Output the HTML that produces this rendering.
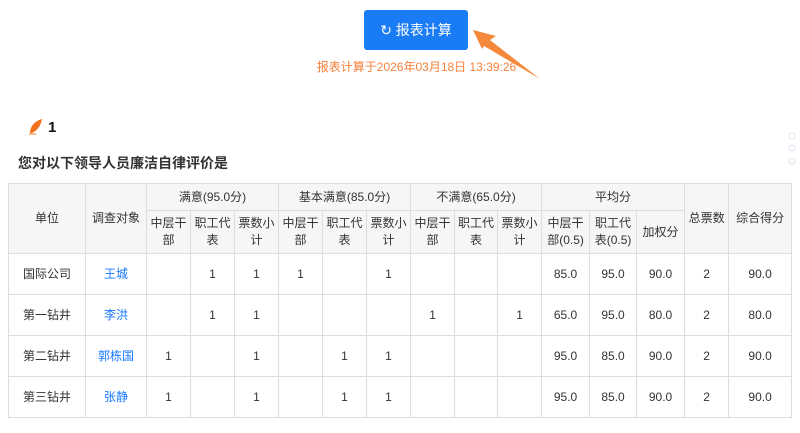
<!DOCTYPE html>
<html><head><meta charset="utf-8"><style>
body{margin:0;width:800px;height:433px;background:#fff;font-family:"Liberation Sans","Noto Sans CJK SC",sans-serif;position:relative;overflow:hidden}
.btn{position:absolute;left:364px;top:10px;width:104px;height:40px;background:#1a7cf5;border-radius:3px;color:#fff;font-size:14px;line-height:40px;text-align:center}
.ts{position:absolute;left:0;width:833px;top:58px;text-align:center;color:#f5813a;font-size:12px}
.num{position:absolute;left:48px;top:119px;font-size:15px;font-weight:bold;color:#111}
.title{position:absolute;left:18px;top:153px;font-size:14px;font-weight:bold;color:#333}
table{position:absolute;left:8px;top:183px;border-collapse:collapse;table-layout:fixed;width:784px;font-size:12px;color:#333}
td,th{border:1px solid #ddd;text-align:center;font-weight:normal;padding:0;line-height:17px}
th{background:#f6f6f6}
tr.h1{height:27px}tr.h2{height:43px}tr.d{height:41px}
a{color:#1677ff;text-decoration:none}
</style></head><body>
<div class="btn">↻ 报表计算</div>
<div class="ts">报表计算于2026年03月18日 13:39:26</div>
<svg style="position:absolute;left:0;top:0" width="800" height="433">
<path d="M473 30 L496 36 L490 40 L540 79 L484 46 L482 49Z" fill="#f5893b"/>
<path d="M30 133 C30 126 35 121 42 119 C41 125 38 130 32 133Z" fill="#f2711c"/>
<path d="M29 134 L36 134" stroke="#f2711c" stroke-width="1"/>
<circle cx="792" cy="136" r="3" fill="none" stroke="#dbe6f0"/>
<circle cx="792" cy="148" r="3" fill="none" stroke="#dbe6f0"/>
<circle cx="792" cy="161" r="3" fill="none" stroke="#dbe6f0"/>
</svg>
<div class="num">1</div>
<div class="title">您对以下领导人员廉洁自律评价是</div>
<table>
<colgroup><col style="width:77px"><col style="width:61px"><col style="width:44px"><col style="width:44px"><col style="width:44px"><col style="width:44px"><col style="width:44px"><col style="width:44px"><col style="width:44px"><col style="width:43px"><col style="width:44px"><col style="width:48px"><col style="width:47px"><col style="width:48px"><col style="width:44px"><col style="width:63px"></colgroup>
<tr class="h1"><th rowspan="2">单位</th><th rowspan="2">调查对象</th><th colspan="3">满意(95.0分)</th><th colspan="3">基本满意(85.0分)</th><th colspan="3">不满意(65.0分)</th><th colspan="3">平均分</th><th rowspan="2">总票数</th><th rowspan="2">综合得分</th></tr>
<tr class="h2"><th>中层干部</th><th>职工代表</th><th>票数小计</th><th>中层干部</th><th>职工代表</th><th>票数小计</th><th>中层干部</th><th>职工代表</th><th>票数小计</th><th>中层干部(0.5)</th><th>职工代表(0.5)</th><th>加权分</th></tr>
<tr class="d"><td>国际公司</td><td><a>王城</a></td><td></td><td>1</td><td>1</td><td>1</td><td></td><td>1</td><td></td><td></td><td></td><td>85.0</td><td>95.0</td><td>90.0</td><td>2</td><td>90.0</td></tr>
<tr class="d"><td>第一钻井</td><td><a>李洪</a></td><td></td><td>1</td><td>1</td><td></td><td></td><td></td><td>1</td><td></td><td>1</td><td>65.0</td><td>95.0</td><td>80.0</td><td>2</td><td>80.0</td></tr>
<tr class="d"><td>第二钻井</td><td><a>郭栋国</a></td><td>1</td><td></td><td>1</td><td></td><td>1</td><td>1</td><td></td><td></td><td></td><td>95.0</td><td>85.0</td><td>90.0</td><td>2</td><td>90.0</td></tr>
<tr class="d"><td>第三钻井</td><td><a>张静</a></td><td>1</td><td></td><td>1</td><td></td><td>1</td><td>1</td><td></td><td></td><td></td><td>95.0</td><td>85.0</td><td>90.0</td><td>2</td><td>90.0</td></tr>
</table>
</body></html>
